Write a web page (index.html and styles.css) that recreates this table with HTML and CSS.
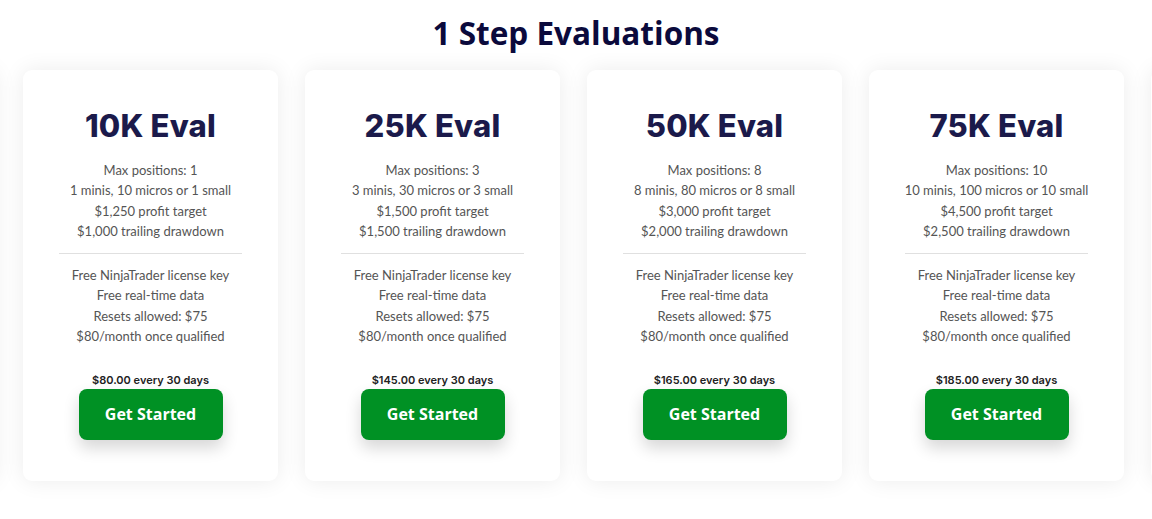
FILE: index.html
```html
<!DOCTYPE html>
<html>
<head>
<meta charset="utf-8">
<link rel="stylesheet" href="styles.css">
</head>
<body>
<section class="evals">
  <h1 class="title">1 Step Evaluations</h1>
  <div class="viewport">
    <div class="track">
      <div class="card card-peek" aria-hidden="true"></div>
      <div class="card">
        <h2 class="card-title">10K Eval</h2>
        <ul class="specs"><li>Max positions: 1</li><li>1 minis, 10 micros or 1 small</li><li>$1,250 profit target</li><li>$1,000 trailing drawdown</li></ul>
        <hr class="divider">
        <ul class="specs"><li>Free NinjaTrader license key</li><li>Free real-time data</li><li>Resets allowed: $75</li><li>$80/month once qualified</li></ul>
        <p class="price">$80.00 every 30 days</p>
        <a class="btn" href="#">Get Started</a>
      </div>
      <div class="card">
        <h2 class="card-title">25K Eval</h2>
        <ul class="specs"><li>Max positions: 3</li><li>3 minis, 30 micros or 3 small</li><li>$1,500 profit target</li><li>$1,500 trailing drawdown</li></ul>
        <hr class="divider">
        <ul class="specs"><li>Free NinjaTrader license key</li><li>Free real-time data</li><li>Resets allowed: $75</li><li>$80/month once qualified</li></ul>
        <p class="price">$145.00 every 30 days</p>
        <a class="btn" href="#">Get Started</a>
      </div>
      <div class="card">
        <h2 class="card-title">50K Eval</h2>
        <ul class="specs"><li>Max positions: 8</li><li>8 minis, 80 micros or 8 small</li><li>$3,000 profit target</li><li>$2,000 trailing drawdown</li></ul>
        <hr class="divider">
        <ul class="specs"><li>Free NinjaTrader license key</li><li>Free real-time data</li><li>Resets allowed: $75</li><li>$80/month once qualified</li></ul>
        <p class="price">$165.00 every 30 days</p>
        <a class="btn" href="#">Get Started</a>
      </div>
      <div class="card">
        <h2 class="card-title">75K Eval</h2>
        <ul class="specs"><li>Max positions: 10</li><li>10 minis, 100 micros or 10 small</li><li>$4,500 profit target</li><li>$2,500 trailing drawdown</li></ul>
        <hr class="divider">
        <ul class="specs"><li>Free NinjaTrader license key</li><li>Free real-time data</li><li>Resets allowed: $75</li><li>$80/month once qualified</li></ul>
        <p class="price">$185.00 every 30 days</p>
        <a class="btn" href="#">Get Started</a>
      </div>
      <div class="card card-peek" aria-hidden="true"></div>
    </div>
  </div>
</section>
</body>
</html>
```
FILE: styles.css
```css
* { box-sizing: border-box; }
html, body { margin: 0; padding: 0; background: #fff; }
body { font-family: "Lato", "Noto Sans", sans-serif; overflow: hidden; }

.evals { padding-top: 13px; }

.title {
  margin: 0;
  text-align: center;
  font-family: "Open Sans", sans-serif;
  font-weight: 700;
  font-size: 31.5px;
  line-height: 40px;
  color: #0b0a3c;
}

.viewport {
  overflow: hidden;
  padding: 17px 0 36px;
}

.track {
  display: flex;
  justify-content: center;
  gap: 27px;
  padding-right: 5px;
}

.card {
  flex: 0 0 255px;
  background: #fff;
  border-radius: 9px;
  box-shadow: 0 0 22px rgba(0, 0, 0, 0.08);
  padding: 36px 18px 41px;
  display: flex;
  flex-direction: column;
  align-items: center;
  text-align: center;
}

.card-title {
  margin: 0 0 14px;
  font-family: "Inter", sans-serif;
  font-weight: 800;
  font-size: 31px;
  line-height: 40px;
  color: #1b1a4b;
  letter-spacing: 0.2px;
}

.specs {
  list-style: none;
  margin: 0;
  padding: 0;
  font-size: 13px;
  line-height: 20.3px;
  color: #555;
}

.divider {
  width: 183px;
  border: 0;
  border-top: 1px solid #e0e0e0;
  margin: 12px 0 11px;
}

.price {
  margin: 26px 0 1px;
  font-family: "Inter", sans-serif;
  font-weight: 600;
  font-size: 11px;
  line-height: 16px;
  color: #222;
}

.btn {
  display: flex;
  align-items: center;
  justify-content: center;
  width: 144px;
  height: 51px;
  border-radius: 8px;
  background: #009124;
  color: #fff;
  text-decoration: none;
  font-family: "Open Sans", sans-serif;
  font-weight: 700;
  font-size: 16px;
  padding-bottom: 1px;
  box-shadow: 0 8px 16px rgba(0, 0, 0, 0.16);
}
```
